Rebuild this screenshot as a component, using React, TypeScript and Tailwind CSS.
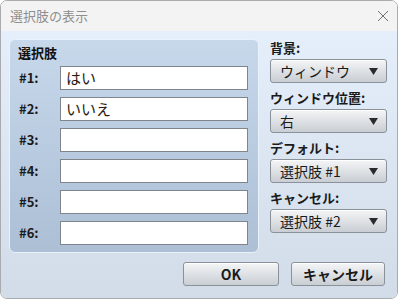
import React from 'react'

const font = { fontFamily: '"Noto Sans CJK JP", "Noto Sans", sans-serif' }

function Arrow() {
  return (
    <svg width="9" height="7" viewBox="0 0 9 7" className="shrink-0">
      <path d="M0 0 H9 L4.5 7 Z" fill="#2a2a2a" />
    </svg>
  )
}

function Select({ value }: { value: string }) {
  return (
    <div className="h-[24px] w-[117px] rounded-[3px] border border-[#8b9199] bg-gradient-to-b from-[#f4f5f6] to-[#c9ced4] flex items-center justify-between pl-[9px] pr-[8px] shadow-[inset_0_1px_0_#ffffff]">
      <span className="text-[14px] leading-none text-[#1a1a1a]">{value}</span>
      <Arrow />
    </div>
  )
}

export default function App() {
  const rows = [
    { label: '#1:', value: 'はい' },
    { label: '#2:', value: 'いいえ' },
    { label: '#3:', value: '' },
    { label: '#4:', value: '' },
    { label: '#5:', value: '' },
    { label: '#6:', value: '' },
  ]

  const settings = [
    { label: '背景:', value: 'ウィンドウ' },
    { label: 'ウィンドウ位置:', value: '右' },
    { label: 'デフォルト:', value: '選択肢 #1' },
    { label: 'キャンセル:', value: '選択肢 #2' },
  ]

  return (
    <div style={font} className="w-[398px] h-[299px] bg-white">
      <div className="w-[398px] h-[299px] rounded-[7px] border border-[#a9abae] overflow-hidden flex flex-col">
        {/* Title bar */}
        <div className="h-[30px] shrink-0 bg-[#f3f3f3] flex items-center justify-between pl-[9px] pr-[8px]">
          <span className="text-[13px] text-[#8e8e8e]">選択肢の表示</span>
          <svg width="12" height="12" viewBox="0 0 12 12">
            <path d="M1 1 L11 11 M11 1 L1 11" stroke="#707070" strokeWidth="1" />
          </svg>
        </div>

        {/* Body */}
        <div className="flex-1 bg-gradient-to-b from-[#e5effb] to-[#d1dce8] pt-[8px] pl-[8px] pr-[12px]">
          <div className="flex">
            {/* Choices group */}
            <div className="w-[250px] h-[214px] rounded-[6px] border border-[#e9f1fa] bg-gradient-to-b from-[#c7d8eb] to-[#acbfd5] pl-[8px] pr-[10px] pt-[3px]">
              <div className="h-[20px] text-[13px] font-bold leading-[20px] text-[#111]">選択肢</div>
              <div className="mt-[3px] flex flex-col gap-[7px]">
                {rows.map(r => (
                  <div key={r.label} className="flex items-center h-[24px]">
                    <span className="w-[42px] pl-[1px] text-[13px] font-bold text-[#1a1a1a]">{r.label}</span>
                    <div className="h-[24px] w-[188px] border border-[#80858c] bg-white flex items-center pl-[5px]">
                      <span className="text-[15px] text-[#2a1c0c]">{r.value}</span>
                    </div>
                  </div>
                ))}
              </div>
            </div>

            {/* Settings */}
            <div className="ml-[11px] pt-[1px] flex flex-col gap-[7px]">
              {settings.map(s => (
                <div key={s.label} className="flex flex-col">
                  <div className="h-[16px] leading-[16px] mb-[3px] text-[13px] font-bold text-[#1a1a1a]">{s.label}</div>
                  <Select value={s.value} />
                </div>
              ))}
            </div>
          </div>

          {/* Buttons */}
          <div className="mt-[9px] flex justify-end gap-[12px]">
            <button className="h-[24px] w-[96px] rounded-[3px] border border-[#8b9199] bg-gradient-to-b from-[#f4f5f6] to-[#c9ced4] text-[14px] font-bold text-[#1a1a1a] shadow-[inset_0_1px_0_#ffffff]">
              OK
            </button>
            <button className="h-[24px] w-[94px] rounded-[3px] border border-[#8b9199] bg-gradient-to-b from-[#f4f5f6] to-[#c9ced4] text-[14px] font-bold text-[#1a1a1a] shadow-[inset_0_1px_0_#ffffff]">
              キャンセル
            </button>
          </div>
        </div>
      </div>
    </div>
  )
}
